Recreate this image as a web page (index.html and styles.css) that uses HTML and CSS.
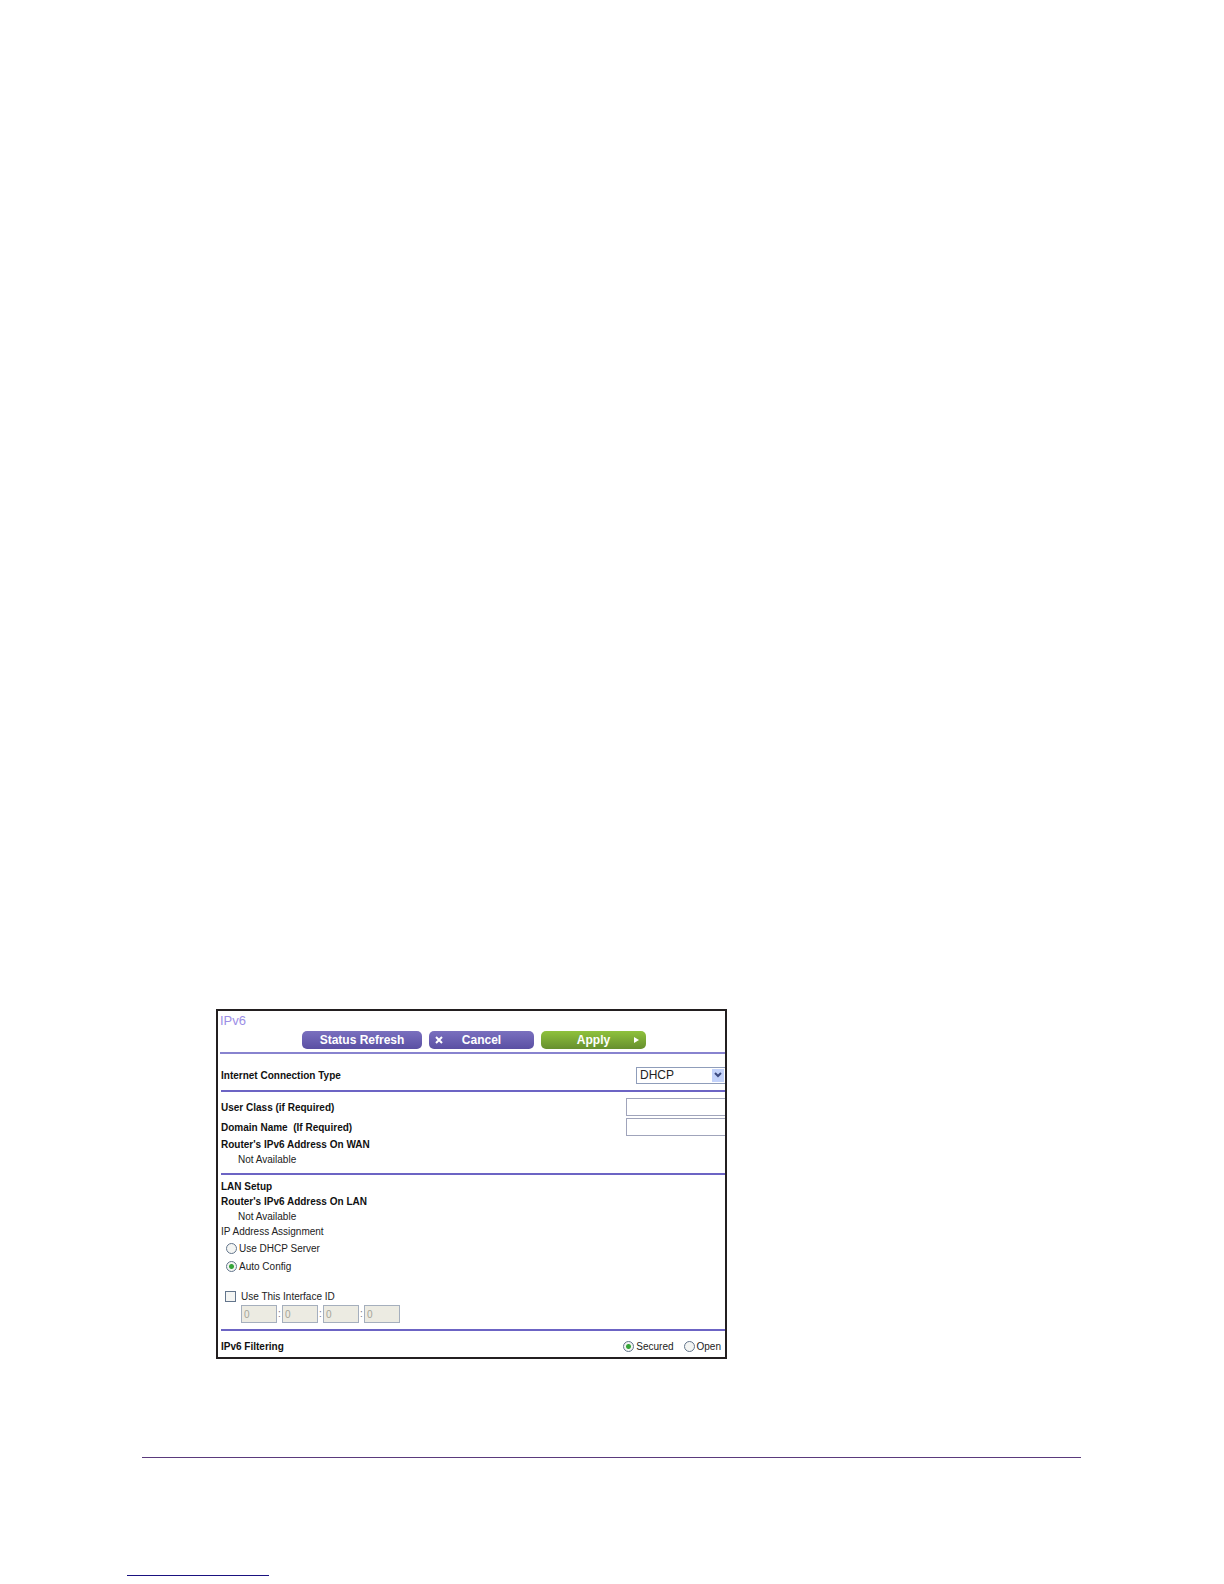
FILE: index.html
```html
<!DOCTYPE html>
<html lang="en">
<head>
<meta charset="utf-8">
<meta name="viewport" content="width=device-width, initial-scale=1">
<title>IPv6</title>
<link rel="stylesheet" href="styles.css">
</head>
<body>
<main class="page">
  <form class="panel">
    <header class="panel-head">
      <h1 class="title">IPv6</h1>
      <div class="actions">
        <button type="button" class="btn btn-wide">Status Refresh</button>
        <button type="button" class="btn">
          <svg class="icon icon-left" viewBox="0 0 8 8" aria-hidden="true"><path d="M1 1l6 6M7 1L1 7" stroke="#fff" stroke-width="2"/></svg>
          Cancel
        </button>
        <button type="button" class="btn btn-apply">
          Apply
          <svg class="icon icon-right" viewBox="0 0 8 8" aria-hidden="true"><path d="M2 1l5 3-5 3z" fill="#fff"/></svg>
        </button>
      </div>
    </header>

    <section class="section connection">
      <label class="name" for="type">Internet Connection Type</label>
      <span class="select-wrap">
        <select id="type" class="select"><option>DHCP</option></select>
        <span class="arrow"><svg viewBox="0 0 8 6" width="8" height="6" aria-hidden="true"><path d="M1 1l3 3 3-3" fill="none" stroke="#3c4a80" stroke-width="2"/></svg></span>
      </span>
    </section>

    <section class="section wan">
      <div class="row"><label class="name" for="uclass">User Class (if Required)</label><input id="uclass" class="text" type="text"></div>
      <div class="row"><label class="name" for="domain">Domain Name&nbsp; (If Required)</label><input id="domain" class="text" type="text"></div>
      <h2 class="name">Router's IPv6 Address On WAN</h2>
      <p class="value">Not Available</p>
    </section>

    <section class="section lan">
      <h2 class="name">LAN Setup</h2>
      <h2 class="name">Router's IPv6 Address On LAN</h2>
      <p class="value">Not Available</p>
      <p>IP Address Assignment</p>
      <label class="choice"><input class="radio" type="radio" name="assign">Use DHCP Server</label>
      <label class="choice"><input class="radio" type="radio" name="assign" checked>Auto Config</label>
      <label class="choice choice-id"><input class="check" type="checkbox">Use This Interface ID</label>
      <div class="ids">
        <input class="id" type="text" value="0" aria-label="Interface ID part 1" disabled><span class="colon">:</span>
        <input class="id" type="text" value="0" aria-label="Interface ID part 2" disabled><span class="colon">:</span>
        <input class="id" type="text" value="0" aria-label="Interface ID part 3" disabled><span class="colon">:</span>
        <input class="id" type="text" value="0" aria-label="Interface ID part 4" disabled>
      </div>
    </section>

    <section class="filtering">
      <h2 class="name">IPv6 Filtering</h2>
      <div class="options">
        <label class="option"><input class="radio" type="radio" name="filter" checked>Secured</label>
        <label class="option"><input class="radio" type="radio" name="filter">Open</label>
      </div>
    </section>
  </form>
</main>
<footer class="footer">
  <hr class="rule">
  <hr class="underline">
</footer>
</body>
</html>
```

FILE: styles.css
```css
* {
  box-sizing: border-box;
}

body {
  margin: 0;
  background: #fff;
  color: #222;
  font: 10px/15px "Liberation Sans", Arial, sans-serif;
}

.page {
  padding: 1009px 24px 0 216px;
}

.panel {
  max-width: 511px;
  border: 2px solid #231f20;
  overflow: hidden;
}

h1,
h2,
p {
  margin: 0;
}

.panel-head {
  margin-left: 2px;
  padding-bottom: 3px;
  border-bottom: 2px solid #8883cf;
}

.title {
  color: #9c8ee6;
  font-size: 13px;
  font-weight: 400;
  line-height: 20px;
}

.actions {
  display: flex;
  gap: 7px;
  padding-left: 82px;
}

.btn {
  position: relative;
  width: 105px;
  height: 18px;
  padding: 0;
  border: 0;
  border-radius: 5px;
  background: linear-gradient(#7a70bf, #5a4fa3);
  color: #fff;
  font: bold 12px/18px "Liberation Sans", Arial, sans-serif;
}

.btn-wide {
  width: 120px;
}

.btn-apply {
  background: linear-gradient(#8fc23c, #668f2e);
}

.icon {
  position: absolute;
  top: 5px;
  width: 8px;
  height: 8px;
}

.icon-left {
  left: 6px;
}

.icon-right {
  right: 6px;
}

.section {
  margin-left: 3px;
  border-bottom: 2px solid #6c64c4;
}

.name {
  color: #111;
  font-size: 10px;
  font-weight: 700;
  line-height: 15px;
}

.row,
.connection,
.filtering {
  display: flex;
  align-items: center;
  justify-content: space-between;
}

.connection {
  height: 38px;
  padding-top: 6px;
}

.select-wrap {
  position: relative;
  width: 89px;
  height: 17px;
}

.select {
  width: 100%;
  height: 100%;
  padding: 0 3px;
  border: 1px solid #8f9dba;
  border-right: 0;
  border-radius: 0;
  background: #fff;
  color: #222;
  appearance: none;
  font: 12px/15px "Liberation Sans", Arial, sans-serif;
}

.arrow {
  position: absolute;
  top: 2px;
  right: 1px;
  display: grid;
  place-items: center;
  width: 12px;
  height: 13px;
  background: #c3d2fa;
  pointer-events: none;
}

.wan {
  padding: 5px 0 6px;
}

.row {
  height: 20px;
}

.text {
  width: 99px;
  height: 18px;
  border: 1px solid #a0a4bb;
  border-right: 0;
  background: #fff;
}

.value {
  padding-left: 17px;
}

.lan {
  padding: 4px 0 6px;
}

.choice {
  display: flex;
  align-items: center;
  gap: 2px;
  height: 18px;
  padding-left: 5px;
}

.choice-id {
  gap: 5px;
  margin-top: 12px;
  padding-left: 4px;
}

.radio,
.check {
  width: 11px;
  height: 11px;
  margin: 0;
  border: 1px solid #63758c;
  background: #f4f5f3;
  appearance: none;
}

.radio {
  border-radius: 50%;
}

.radio:checked {
  background: radial-gradient(circle, #36a53a 2px, #f4f5f3 3px);
}

.ids {
  display: flex;
  padding-left: 20px;
}

.id {
  width: 36px;
  height: 18px;
  padding: 0 2px;
  border: 1px solid #a5afbd;
  background: #ecebe2;
  color: #a5a598;
  font: 10px/16px "Liberation Sans", Arial, sans-serif;
}

.colon {
  width: 5px;
  color: #777;
  line-height: 18px;
  text-align: center;
}

.filtering {
  height: 26px;
  padding: 4px 4px 0 3px;
}

.options,
.option {
  display: flex;
  align-items: center;
}

.options {
  gap: 10px;
}

.option {
  gap: 2px;
}

.footer {
  padding: 98px 0 8px;
}

.rule {
  margin: 0 143px 0 142px;
  border: 0;
  border-top: 1px solid #5a3a7c;
}

.underline {
  width: 142px;
  margin: 117px 0 0 127px;
  border: 0;
  border-top: 1px solid #1a1280;
}
```
